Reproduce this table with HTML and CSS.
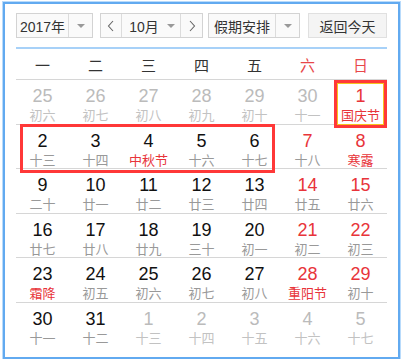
FILE: index.html
```html
<!DOCTYPE html>
<html lang="zh">
<head>
<meta charset="utf-8">
<link rel="stylesheet" href="styles.css">
</head>
<body>
<div class="frame">
  <div class="controls">
    <div class="select year">
      <span class="sel-text">2017年</span>
      <span class="sel-arrow"><i class="tri"></i></span>
    </div>
    <div class="select month">
      <span class="nav"><svg width="8" height="12" viewBox="0 0 8 12"><polyline points="6,1 1.5,6 6,11" fill="none" stroke="#666" stroke-width="1.1"/></svg></span>
      <span class="sel-text mid">10月<i class="tri small"></i></span>
      <span class="nav"><svg width="8" height="12" viewBox="0 0 8 12"><polyline points="2,1 6.5,6 2,11" fill="none" stroke="#666" stroke-width="1.1"/></svg></span>
    </div>
    <div class="select holiday">
      <span class="sel-text">假期安排</span>
      <span class="sel-arrow"><i class="tri"></i></span>
    </div>
    <div class="btn">返回今天</div>
  </div>
  <div class="blue-line"></div>
  <div class="week">
    <span>一</span><span>二</span><span>三</span><span>四</span><span>五</span><span class="we">六</span><span class="we">日</span>
  </div>
  <div class="row">
    <div class="cell other"><b>25</b><em>初六</em></div>
    <div class="cell other"><b>26</b><em>初七</em></div>
    <div class="cell other"><b>27</b><em>初八</em></div>
    <div class="cell other"><b>28</b><em>初九</em></div>
    <div class="cell other"><b>29</b><em>初十</em></div>
    <div class="cell other"><b>30</b><em>十一</em></div>
    <div class="cell red hol today"><b>1</b><em>国庆节</em></div>
  </div>
  <div class="row">
    <div class="cell"><b>2</b><em>十三</em></div>
    <div class="cell"><b>3</b><em>十四</em></div>
    <div class="cell hol"><b>4</b><em>中秋节</em></div>
    <div class="cell"><b>5</b><em>十六</em></div>
    <div class="cell"><b>6</b><em>十七</em></div>
    <div class="cell red"><b>7</b><em>十八</em></div>
    <div class="cell red hol"><b>8</b><em>寒露</em></div>
    <div class="mark"></div>
  </div>
  <div class="row">
    <div class="cell"><b>9</b><em>二十</em></div>
    <div class="cell"><b>10</b><em>廿一</em></div>
    <div class="cell"><b>11</b><em>廿二</em></div>
    <div class="cell"><b>12</b><em>廿三</em></div>
    <div class="cell"><b>13</b><em>廿四</em></div>
    <div class="cell red"><b>14</b><em>廿五</em></div>
    <div class="cell red"><b>15</b><em>廿六</em></div>
  </div>
  <div class="row">
    <div class="cell"><b>16</b><em>廿七</em></div>
    <div class="cell"><b>17</b><em>廿八</em></div>
    <div class="cell"><b>18</b><em>廿九</em></div>
    <div class="cell"><b>19</b><em>三十</em></div>
    <div class="cell"><b>20</b><em>初一</em></div>
    <div class="cell red"><b>21</b><em>初二</em></div>
    <div class="cell red"><b>22</b><em>初三</em></div>
  </div>
  <div class="row">
    <div class="cell hol"><b>23</b><em>霜降</em></div>
    <div class="cell"><b>24</b><em>初五</em></div>
    <div class="cell"><b>25</b><em>初六</em></div>
    <div class="cell"><b>26</b><em>初七</em></div>
    <div class="cell"><b>27</b><em>初八</em></div>
    <div class="cell red hol"><b>28</b><em>重阳节</em></div>
    <div class="cell red"><b>29</b><em>初十</em></div>
  </div>
  <div class="row last">
    <div class="cell"><b>30</b><em>十一</em></div>
    <div class="cell"><b>31</b><em>十二</em></div>
    <div class="cell other"><b>1</b><em>十三</em></div>
    <div class="cell other"><b>2</b><em>十四</em></div>
    <div class="cell other"><b>3</b><em>十五</em></div>
    <div class="cell other"><b>4</b><em>十六</em></div>
    <div class="cell other"><b>5</b><em>十七</em></div>
  </div>
</div>
</body>
</html>
```

FILE: styles.css
```css
* { box-sizing: border-box; }
body {
  margin: 0;
  background: #fff;
  font-family: "Liberation Sans", "Noto Sans CJK SC", sans-serif;
}
.frame {
  margin: 2px 0 0 3px;
  width: 397px;
  height: 357px;
  border: 2px solid #62aaf0;
  box-shadow: 0 0 0 1px #b9dbfb;
  padding: 9px 0 0 11px;
}
.controls {
  display: flex;
  height: 25px;
  width: 371px;
}
.select {
  display: flex;
  height: 25px;
  border: 1px solid #d3d3d3;
  background: #fafafa;
  color: #333;
  font-size: 14px;
}
.sel-text {
  display: flex;
  align-items: center;
  justify-content: center;
  flex: 1;
}
.sel-arrow {
  display: flex;
  align-items: center;
  justify-content: center;
  width: 24px;
  border-left: 1px solid #dcdcdc;
}
.tri {
  display: block;
  width: 0;
  height: 0;
  border-left: 4px solid transparent;
  border-right: 4px solid transparent;
  border-top: 4px solid #999;
}
.tri.small { margin-left: 8px; }
.year { width: 77px; }
.month { width: 103px; margin-left: 7px; }
.holiday { width: 92px; margin-left: 5px; }
.nav {
  display: flex;
  align-items: center;
  justify-content: center;
  width: 21px;
}
.nav:first-child { border-right: 1px solid #dcdcdc; }
.nav:last-child { border-left: 1px solid #dcdcdc; width: 22px; }
.mid { padding-left: 2px; }
.btn {
  width: 79px;
  margin-left: 8px;
  height: 25px;
  border: 1px solid #e0e0e0;
  background: #f4f4f4;
  color: #333;
  font-size: 14px;
  display: flex;
  align-items: center;
  justify-content: center;
}
.blue-line {
  width: 371px;
  height: 2px;
  margin-top: 9px;
  background: #a7d1f8;
}
.week {
  display: grid;
  grid-template-columns: repeat(7, 53px);
  width: 371px;
  height: 31px;
  border-bottom: 1px solid #d6d6d6;
  align-items: center;
  font-size: 15px;
  color: #333;
  padding-top: 1px;
}
.week span { text-align: center; }
.week .we { color: #e8474a; }
.row {
  display: grid;
  grid-template-columns: repeat(7, 53px);
  grid-template-rows: 1fr;
  width: 371px;
  height: 44.6px;
  border-bottom: 1px solid #d6d6d6;
}
.row.last { border-bottom: none; }
.cell {
  grid-row: 1;
  display: flex;
  flex-direction: column;
  align-items: center;
  padding-top: 6px;
}
.cell:nth-child(1) { grid-column: 1; }
.cell:nth-child(2) { grid-column: 2; }
.cell:nth-child(3) { grid-column: 3; }
.cell:nth-child(4) { grid-column: 4; }
.cell:nth-child(5) { grid-column: 5; }
.cell:nth-child(6) { grid-column: 6; }
.cell:nth-child(7) { grid-column: 7; }
.cell b {
  font-weight: normal;
  font-size: 18px;
  line-height: 20px;
  color: #111;
}
.cell em {
  font-style: normal;
  font-size: 13px;
  line-height: 19px;
  color: #999;
}
.cell.red b { color: #e8343a; }
.cell.hol em { color: #e8343a; }
.cell.other b { color: #bbb; }
.cell.other em { color: #c2c2c2; }
.cell.today {
  border: 3px solid #ff3838;
  box-shadow: inset 0 0 0 1px #f4c21e;
  margin-bottom: -1px;
  padding-top: 3px;
}
.mark {
  grid-row: 1;
  grid-column: 1 / 6;
  border: 3px solid #ff3838;
  margin: -1px 6px -3px 4px;
  pointer-events: none;
}
```
